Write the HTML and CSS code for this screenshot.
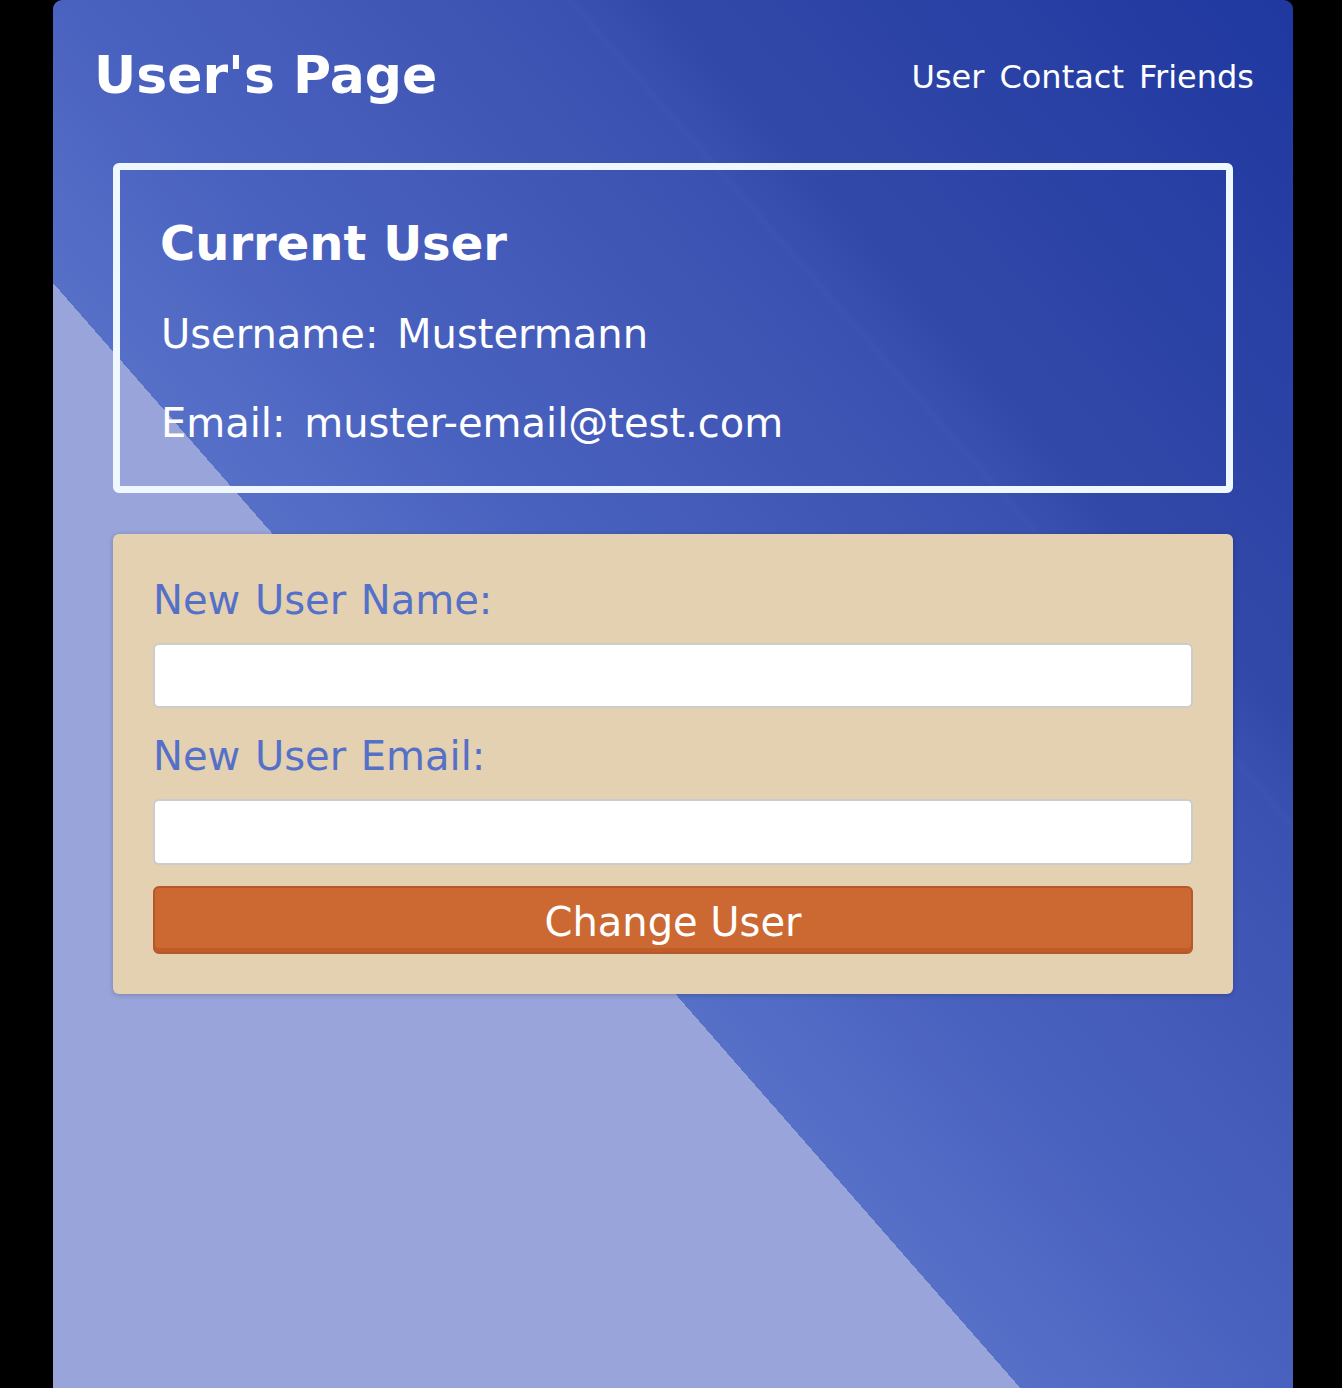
FILE: index.html
```html
<!DOCTYPE html>
<html lang="en">
<head>
<meta charset="utf-8">
<title>User's Page</title>
<link rel="stylesheet" href="styles.css">
</head>
<body>
<div class="page">
  <header class="topbar">
    <h1 class="title">User's Page</h1>
    <nav class="nav">
      <a href="#" class="nav-link">User</a>
      <a href="#" class="nav-link">Contact</a>
      <a href="#" class="nav-link">Friends</a>
    </nav>
  </header>
  <main class="content">
    <section class="current">
      <h2 class="current-title">Current User</h2>
      <p class="info">Username: Mustermann</p>
      <p class="info info-email">Email: muster-email@test.com</p>
    </section>
    <form class="change" onsubmit="return false;">
      <label class="field-label" for="new-name">New User Name:</label>
      <input class="field" id="new-name" type="text">
      <label class="field-label field-label-second" for="new-email">New User Email:</label>
      <input class="field field-last" id="new-email" type="text">
      <button class="btn" type="submit">Change User</button>
    </form>
  </main>
</div>
</body>
</html>
```
FILE: styles.css
```css
html, body {
  margin: 0;
  padding: 0;
  background: #000;
}

body {
  font-family: "DejaVu Sans", Verdana, sans-serif;
}

.page {
  width: 1240px;
  height: 1388px;
  margin-left: 53px;
  border-radius: 9px 9px 0 0;
  overflow: hidden;
  background: linear-gradient(48.8deg,
    #98a4da 0%, #98a4da 39.4%,
    #5670c8 39.4%,
    #4a62bf 50%,
    #3b51b1 70.3%,
    #3d53b2 70.55%,
    #3a50b0 70.8%,
    #3349a9 74%,
    #1f38a0 100%);
}

.topbar {
  display: flex;
  justify-content: space-between;
  align-items: flex-start;
  padding: 45px 39px 0 41px;
}

.title {
  margin: 0;
  font-size: 52px;
  line-height: 60px;
  font-weight: bold;
  color: #fff;
}

.nav {
  display: flex;
  gap: 15px;
  margin-top: 14px;
}

.nav-link {
  color: #fff;
  text-decoration: none;
  font-size: 32px;
  line-height: 37px;
}

.content {
  padding: 58px 60px 0 60px;
}

.current {
  border: 7px solid #f0f8ff;
  border-radius: 6px;
  padding: 45px 39px 39.5px 40px;
  color: #fff;
}

.current-title {
  margin: 0 0 40px 0;
  font-size: 48px;
  line-height: 56px;
  font-weight: bold;
}

.info {
  margin: 0 0 0 1px;
  font-size: 40px;
  line-height: 46px;
  word-spacing: 6px;
}

.info-email {
  margin-top: 43px;
}

.change {
  margin: 41px 0 0 0;
  display: flex;
  flex-direction: column;
  background: #e3d1b1;
  border-radius: 6px;
  padding: 43px 40px 40px 40px;
  box-shadow: 0 1px 5px rgba(0, 0, 0, 0.2);
}

.field-label {
  font-size: 40px;
  line-height: 46px;
  color: #5570c8;
  margin-bottom: 20px;
  word-spacing: 2px;
}

.field-label-second {
  margin-top: 25px;
}

.field {
  box-sizing: border-box;
  height: 65.5px;
  width: 100%;
  margin: 0;
  border: 2px solid #cccccc;
  border-radius: 6px;
  background: #fff;
  font: inherit;
  font-size: 32px;
  padding: 0 12px;
}

.field-last {
  margin-bottom: 21px;
}

.btn {
  box-sizing: border-box;
  height: 68px;
  width: 100%;
  margin: 0;
  padding: 4px 0 0 0;
  font: inherit;
  font-size: 40px;
  line-height: 46px;
  color: #fff;
  background: #cc6933;
  border: 2px solid #b5582a;
  border-radius: 6px;
  box-shadow: inset 0 -4px 0 rgba(140, 50, 10, 0.22);
  cursor: pointer;
}
```
